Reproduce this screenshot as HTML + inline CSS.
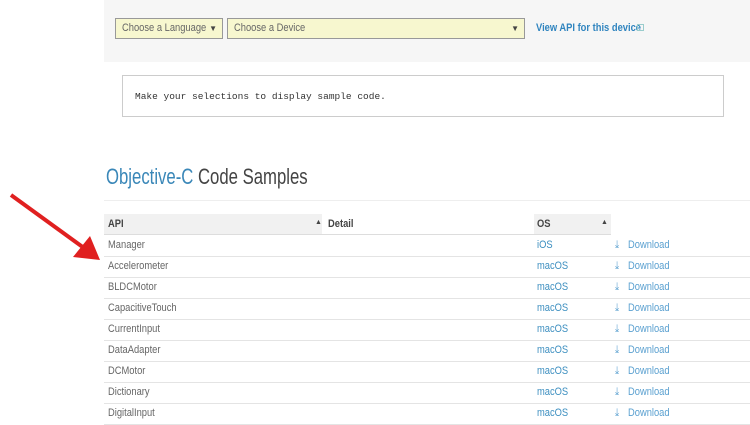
<!DOCTYPE html>
<html><head><style>
body{margin:0;width:750px;height:418px;overflow:hidden;background:#fff;font-family:"Liberation Sans",sans-serif;position:relative}
.a{position:absolute}
.sel{position:absolute;top:18px;height:19px;background:#f7f7cf;border:1px solid #999;font-size:11px;color:#666;line-height:19px;padding-left:6px;box-sizing:content-box}
.sel .ar{position:absolute;right:5px;top:0;font-size:8px;color:#444}
.n{display:inline-block;transform:scaleX(.85);transform-origin:left;white-space:nowrap}
.row{position:absolute;left:104px;width:646px;height:21px;border-bottom:1px solid #e4e4e4;font-size:11px;color:#666;line-height:21px}
.row span{position:absolute;display:inline-block;transform:scaleX(.85);transform-origin:left;white-space:nowrap}
.row .c1{left:4px}
.row .c2{left:433px;color:#3d8fc0}
.row .c3{left:511px;color:#5aa0d0}
.row .c4{left:524px;color:#5aa0d0}
</style></head><body>
<div class="a" style="left:104px;top:0;width:646px;height:62px;background:#f6f6f6"></div>
<div class="sel" style="left:115px;width:100px"><span class="n">Choose a Language</span><span class="ar">&#9660;</span></div>
<div class="sel" style="left:227px;width:290px"><span class="n">Choose a Device</span><span class="ar">&#9660;</span></div>
<div class="a" style="left:536px;top:22px;font-size:11px;font-weight:bold;color:#2f84bf"><span class="n">View API for this device</span></div>
<div class="a" style="left:637px;top:24px;width:5px;height:5px;border:1px solid #9cc"></div>
<div class="a" style="left:122px;top:75px;width:600px;height:40px;border:1px solid #ccc"></div>
<div class="a" style="left:135px;top:91px;font-family:'Liberation Mono',monospace;font-size:9.5px;color:#333">Make your selections to display sample code.</div>
<div class="a" style="left:106px;top:164px;font-size:22px;color:#444;white-space:nowrap"><span class="n" style="transform:scaleX(.76)"><span style="color:#3a87b8">Objective-C</span> Code Samples</span></div>
<div class="a" style="left:104px;top:200px;width:646px;height:1px;background:#eee"></div>
<div class="a" style="left:104px;top:214px;width:507px;height:20px;background:#f1f1f1;border-bottom:1px solid #ddd"></div>
<div class="a" style="left:322px;top:214px;width:212px;height:20px;background:#fff"></div>
<div class="a" style="left:108px;top:218px;font-size:11px;font-weight:bold;color:#444"><span class="n">API</span></div>
<div class="a" style="left:315px;top:219px;font-size:7px;color:#444">&#9650;</div>
<div class="a" style="left:328px;top:218px;font-size:11px;font-weight:bold;color:#444"><span class="n">Detail</span></div>
<div class="a" style="left:537px;top:218px;font-size:11px;font-weight:bold;color:#444"><span class="n">OS</span></div>
<div class="a" style="left:601px;top:219px;font-size:7px;color:#444">&#9650;</div>
<div class="row" style="top:235px"><span class="c1">Manager</span><span class="c2">iOS</span><span class="c3">&#10515;</span><span class="c4">Download</span></div>
<div class="row" style="top:256px"><span class="c1">Accelerometer</span><span class="c2">macOS</span><span class="c3">&#10515;</span><span class="c4">Download</span></div>
<div class="row" style="top:277px"><span class="c1">BLDCMotor</span><span class="c2">macOS</span><span class="c3">&#10515;</span><span class="c4">Download</span></div>
<div class="row" style="top:298px"><span class="c1">CapacitiveTouch</span><span class="c2">macOS</span><span class="c3">&#10515;</span><span class="c4">Download</span></div>
<div class="row" style="top:319px"><span class="c1">CurrentInput</span><span class="c2">macOS</span><span class="c3">&#10515;</span><span class="c4">Download</span></div>
<div class="row" style="top:340px"><span class="c1">DataAdapter</span><span class="c2">macOS</span><span class="c3">&#10515;</span><span class="c4">Download</span></div>
<div class="row" style="top:361px"><span class="c1">DCMotor</span><span class="c2">macOS</span><span class="c3">&#10515;</span><span class="c4">Download</span></div>
<div class="row" style="top:382px"><span class="c1">Dictionary</span><span class="c2">macOS</span><span class="c3">&#10515;</span><span class="c4">Download</span></div>
<div class="row" style="top:403px"><span class="c1">DigitalInput</span><span class="c2">macOS</span><span class="c3">&#10515;</span><span class="c4">Download</span></div>
<svg class="a" style="left:0;top:0" width="120" height="280"><line x1="11" y1="195" x2="84" y2="248" stroke="#e02020" stroke-width="4"/><polygon points="100,260 73,257 90,236" fill="#e02020"/></svg>
</body></html>
